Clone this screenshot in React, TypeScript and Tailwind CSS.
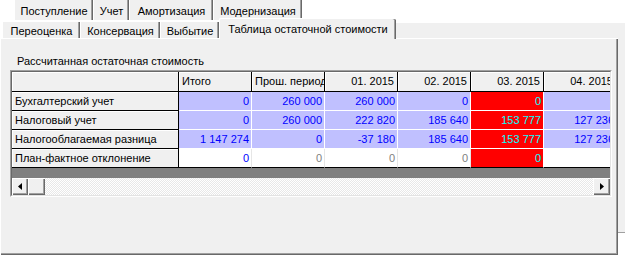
import React from "react";

type Cell = { text?: string; kind: "blue" | "red" | "white" };

const topTabs = [
  { label: "Поступление", w: "w-[79px]" },
  { label: "Учет", w: "w-[36px]" },
  { label: "Амортизация", w: "w-[84px]" },
  { label: "Модернизация", w: "w-[89px]" },
];

const lowTabs = [
  { label: "Переоценка", w: "w-[78px]" },
  { label: "Консервация", w: "w-[80px]" },
  { label: "Выбытие", w: "w-[59px]" },
];

const headers = ["Итого", "Прош. период", "01. 2015", "02. 2015", "03. 2015", "04. 2015"];

const rows: { label: string; cells: Cell[] }[] = [
  {
    label: "Бухгалтерский учет",
    cells: [
      { text: "0", kind: "blue" },
      { text: "260 000", kind: "blue" },
      { text: "260 000", kind: "blue" },
      { text: "0", kind: "blue" },
      { text: "0", kind: "red" },
      { kind: "blue" },
    ],
  },
  {
    label: "Налоговый учет",
    cells: [
      { text: "0", kind: "blue" },
      { text: "260 000", kind: "blue" },
      { text: "222 820", kind: "blue" },
      { text: "185 640", kind: "blue" },
      { text: "153 777", kind: "red" },
      { text: "127 236", kind: "blue" },
    ],
  },
  {
    label: "Налогооблагаемая разница",
    cells: [
      { text: "1 147 274", kind: "blue" },
      { text: "0", kind: "blue" },
      { text: "-37 180", kind: "blue" },
      { text: "185 640", kind: "blue" },
      { text: "153 777", kind: "red" },
      { text: "127 236", kind: "blue" },
    ],
  },
];

const planRow: Cell[] = [
  { text: "0", kind: "white" },
  { text: "0", kind: "white" },
  { text: "0", kind: "white" },
  { text: "0", kind: "white" },
  { text: "0", kind: "red" },
  { kind: "white" },
];

function DataCell({ cell, last, planIdx }: { cell: Cell; last?: boolean; planIdx?: number }) {
  const bg =
    cell.kind === "red"
      ? "bg-[#ff0000] text-[#00ffff] border-r-white"
      : cell.kind === "blue"
        ? "bg-[#c0c0ff] text-[#0000ff] border-r-white"
        : planIdx === 0
          ? "bg-white text-[#0000ff] border-r-[#e6e6e6]"
          : "bg-white text-[#808080] border-r-[#e6e6e6]";
  const bottom = last ? "border-b-black" : "border-b-white";
  return (
    <div
      className={`flex h-[19px] items-center justify-end overflow-hidden whitespace-nowrap border-b border-r pr-[2px] ${bg} ${bottom}`}
    >
      {cell.text}
    </div>
  );
}

function Arrow({ dir }: { dir: "left" | "right" }) {
  return (
    <svg width="4" height="7" viewBox="0 0 4 7">
      {dir === "left" ? <polygon points="4,0 4,7 0,3.5" fill="#000" /> : <polygon points="0,0 0,7 4,3.5" fill="#000" />}
    </svg>
  );
}

function RaisedBox({ className, children }: { className: string; children?: React.ReactNode }) {
  return (
    <div
      className={`flex h-[17px] items-center justify-center bg-[#f0f0f0] shadow-[inset_1px_1px_0_#ffffff,inset_-1px_-1px_0_#696969,inset_-2px_-2px_0_#a0a0a0] ${className}`}
    >
      {children}
    </div>
  );
}

export default function App() {
  return (
    <div className="h-[255px] w-[625px] overflow-hidden bg-white font-['Liberation_Sans',Arial,sans-serif] text-[11px] leading-[13px] text-black">
      {/* upper tab row */}
      <div className="flex h-[20px] pl-[14px]">
        {topTabs.map((t) => (
          <div
            key={t.label}
            className={`flex h-full justify-center border-l border-white bg-[#f0f0f0] pt-[5px] shadow-[inset_-1px_0_0_#696969,inset_-2px_0_0_#a0a0a0] ${t.w}`}
          >
            {t.label}
          </div>
        ))}
      </div>

      {/* lower tab row with the selected tab */}
      <div className="flex h-[18px] items-end pl-[2px]">
        {lowTabs.map((t) => (
          <div
            key={t.label}
            className={`flex h-[17px] justify-center border-l border-t border-white bg-[#f0f0f0] pt-[3px] shadow-[inset_-1px_0_0_#696969,inset_-2px_0_0_#a0a0a0] ${t.w}`}
          >
            {t.label}
          </div>
        ))}
        <div className="relative z-10 -mb-px flex h-[21px] w-[177px] justify-center rounded-t-[2px] border-l border-t border-white bg-[#f0f0f0] pt-[4px] shadow-[inset_-1px_0_0_#696969,inset_-2px_0_0_#a0a0a0]">
          Таблица остаточной стоимости
        </div>
        <div className="h-[15px] flex-1 bg-[#f0f0f0]" />
      </div>

      <div className="flex">
        {/* panel */}
        <div className="h-[217px] w-[618px] border-l border-t border-white bg-[#f0f0f0] px-[9px] pt-[16px] shadow-[inset_-1px_-1px_0_#696969,inset_-2px_-2px_0_#a0a0a0]">
          <div className="h-[13px] pl-[7px]">Рассчитанная остаточная стоимость</div>

          {/* grid frame */}
          <div className="mt-[2px] w-[602px] border border-b-white border-l-[#a0a0a0] border-r-white border-t-[#a0a0a0]">
            <div className="border border-b-[#e3e3e3] border-l-[#696969] border-r-[#e3e3e3] border-t-[#696969]">
              <div className="w-[598px] overflow-hidden">
                <div className="grid w-[605px] grid-cols-[167px_repeat(6,73px)]">
                  <div className="h-[20px] border-b border-r border-black bg-[#f0f0f0] shadow-[inset_1px_1px_0_#ffffff]" />
                  {headers.map((h, i) => (
                    <div
                      key={h}
                      className={`flex h-[20px] items-center overflow-hidden whitespace-nowrap border-b border-r border-black bg-[#f0f0f0] shadow-[inset_1px_1px_0_#ffffff] ${
                        i < 2 ? "justify-start pl-[3px]" : "justify-end pr-[3px]"
                      }`}
                    >
                      {h}
                    </div>
                  ))}

                  {rows.map((r) => (
                    <React.Fragment key={r.label}>
                      <div className="flex h-[19px] items-center border-b border-r border-black bg-[#f0f0f0] pl-[3px] shadow-[inset_1px_1px_0_#ffffff]">
                        {r.label}
                      </div>
                      {r.cells.map((c, i) => (
                        <DataCell key={i} cell={c} />
                      ))}
                    </React.Fragment>
                  ))}

                  <div className="flex h-[19px] items-center border-b border-r border-black bg-[#f0f0f0] pl-[3px] shadow-[inset_1px_1px_0_#ffffff]">
                    План-фактное отклонение
                  </div>
                  {planRow.map((c, i) => (
                    <DataCell key={i} cell={c} last planIdx={i} />
                  ))}
                </div>
              </div>

              <div className="h-[10px] bg-[#808080]" />

              {/* horizontal scrollbar */}
              <div className="flex h-[17px]">
                <RaisedBox className="w-[16px]">
                  <Arrow dir="left" />
                </RaisedBox>
                <RaisedBox className="w-[17px]" />
                <div className="flex-1 bg-[repeating-conic-gradient(#ffffff_0%_25%,#e8e8e8_0%_50%)] bg-[length:2px_2px]" />
                <RaisedBox className="w-[17px]">
                  <Arrow dir="right" />
                </RaisedBox>
              </div>
            </div>
          </div>
        </div>

        {/* strip right of the panel */}
        <div className="flex w-[7px] flex-col">
          <div className="h-[195px] border-b border-[#a0a0a0] bg-[#f0f0f0]" />
        </div>
      </div>
    </div>
  );
}
